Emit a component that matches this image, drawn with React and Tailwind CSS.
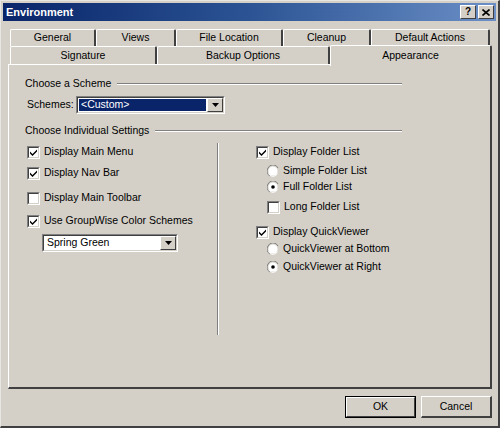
import React from 'react';

const font = { fontFamily: '"Liberation Sans", Arial, sans-serif' };

function Check({ checked }) {
    return (
        <span className="w-[13px] h-[13px] bg-white border-t border-l border-[#808080] border-r border-b border-r-white border-b-white shrink-0 flex">
            <span className="flex-1 border-t border-l border-[#404040] border-r border-b border-r-[#d4d0c8] border-b-[#d4d0c8] flex items-center justify-center">
                {checked && (
                    <svg width="9" height="9" viewBox="0 0 9 9">
                        <path d="M1 3.5 L3.5 6 L8 1.5 L8 3.5 L3.5 8 L1 5.5 Z" fill="#000" />
                    </svg>
                )}
            </span>
        </span>
    );
}

function Radio({ checked }) {
    return (
        <svg width="12" height="12" viewBox="0 0 12 12" className="shrink-0">
            <path d="M11 3 A5.5 5.5 0 0 0 1 3" fill="none" stroke="#808080" strokeWidth="1" />
            <path d="M1 3 A5.5 5.5 0 0 0 3 11" fill="none" stroke="#808080" strokeWidth="1" />
            <circle cx="6" cy="6" r="4.6" fill="#fff" />
            <path d="M1.5 8.5 A5 5 0 0 0 10.5 8.5" fill="none" stroke="#fff" strokeWidth="1" />
            {checked && <circle cx="6" cy="6" r="1.8" fill="#000" />}
        </svg>
    );
}

function Tab({ w, label, h = 'h-[17px]' }) {
    return (
        <div className={`${w} ${h} shrink-0 flex items-center justify-center border-l border-t border-white border-r-2 border-r-[#404040] rounded-tl-[2px] rounded-tr-[2px] text-[10.5px] text-black`}>
            {label}
        </div>
    );
}

function Item({ box, label, mt, indent = '' }) {
    return (
        <div className={`h-[16px] flex items-center ${mt} ${indent}`}>
            {box}
            <span className="ml-[4px] text-[10.5px] text-black">{label}</span>
        </div>
    );
}

function Select({ w, value, selected }) {
    return (
        <div className={`${w} h-[18px] flex bg-white border-t border-l border-[#808080] border-r border-b border-r-white border-b-white`}>
            <div className="flex-1 flex border-t border-l border-[#404040] border-r border-b border-r-[#d4d0c8] border-b-[#d4d0c8]">
                <div className="flex-1 flex items-center p-[1px]">
                    <span className={`h-full flex-1 flex items-center pl-[2px] text-[10.5px] ${selected ? 'bg-[#0a246a] text-white' : 'text-black'}`}>
                        {value}
                    </span>
                </div>
                <div className="w-[16px] bg-[#d4d0c8] border-t border-l border-white border-r border-b border-r-[#404040] border-b-[#404040] flex items-center justify-center">
                    <svg width="7" height="4" viewBox="0 0 7 4">
                        <path d="M0 0 H7 L3.5 4 Z" fill="#000" />
                    </svg>
                </div>
            </div>
        </div>
    );
}

function Heading({ label }) {
    return (
        <div className="h-[14px] flex items-center pr-[88px]">
            <span className="text-[10.5px] text-black">{label}</span>
            <div className="flex-1 ml-[6px] flex flex-col">
                <div className="h-px bg-[#808080]" />
                <div className="h-px bg-white" />
            </div>
        </div>
    );
}

export default function App() {
    return (
        <div className="w-[500px] h-[428px] bg-[#d4d0c8] flex flex-col border-l border-t border-[#e8e6e2] border-r-2 border-b-2 border-r-[#404040] border-b-[#404040] overflow-hidden" style={font}>
            {/* title bar */}
            <div className="mx-[2px] mt-[2px] h-[18px] flex items-center bg-gradient-to-r from-[#0a246a] via-[#2c5494] to-[#6b8fc6] pl-[3px] pr-[2px]">
                <span className="text-white text-[11px] font-bold flex-1">Environment</span>
                <div className="flex gap-[2px]">
                    <div className="w-[16px] h-[14px] bg-[#d4d0c8] border-t border-l border-white border-r border-b border-r-[#404040] border-b-[#404040] flex items-center justify-center text-[10px] font-bold leading-none">?</div>
                    <div className="w-[16px] h-[14px] bg-[#d4d0c8] border-t border-l border-white border-r border-b border-r-[#404040] border-b-[#404040] flex items-center justify-center">
                        <svg width="8" height="7" viewBox="0 0 8 7">
                            <path d="M0.5 0.5 L7.5 6.5 M7.5 0.5 L0.5 6.5" stroke="#000" strokeWidth="1.6" />
                        </svg>
                    </div>
                </div>
            </div>

            {/* tabs */}
            <div className="mt-[8px] pl-[9px] flex">
                <Tab w="w-[86px]" label="General" />
                <Tab w="w-[80px]" label="Views" />
                <Tab w="w-[107px]" label="File Location" />
                <Tab w="w-[88px]" label="Cleanup" />
                <Tab w="w-[119px]" label="Default Actions" />
            </div>
            <div className="h-[18px] pl-[9px] flex items-end">
                <Tab w="w-[147px]" h="h-[18px]" label="Signature" />
                <Tab w="w-[173px]" h="h-[18px]" label="Backup Options" />
                <div className="w-[162px] h-[21px] -mb-[2px] relative z-10 bg-[#d4d0c8] flex items-start justify-center pt-[2px] border-l border-t border-white border-r-2 border-r-[#404040] rounded-tl-[2px] rounded-tr-[2px] text-[10.5px] text-black">
                    Appearance
                </div>
            </div>

            {/* panel */}
            <div className="ml-[7px] w-[484px] h-[325px] border-l border-t border-white border-r-2 border-b-2 border-r-[#404040] border-b-[#404040] pl-[16px] pt-[12px] flex flex-col">
                <Heading label="Choose a Scheme" />
                <div className="mt-[5px] h-[18px] flex items-center">
                    <span className="text-[10.5px] text-black pl-[2px] w-[51px]">Schemes:</span>
                    <Select w="w-[149px]" value="<Custom>" selected />
                </div>
                <div className="mt-[10px]">
                    <Heading label="Choose Individual Settings" />
                </div>

                <div className="mt-[5px] h-[192px] flex">
                    <div className="w-[192px] pl-[2px] flex flex-col">
                        <Item mt="mt-[1px]" box={<Check checked />} label="Display Main Menu" />
                        <Item mt="mt-[5px]" box={<Check checked />} label="Display Nav Bar" />
                        <Item mt="mt-[9px]" box={<Check />} label="Display Main Toolbar" />
                        <Item mt="mt-[7px]" box={<Check checked />} label="Use GroupWise Color Schemes" />
                        <div className="mt-[5px] ml-[15px]">
                            <Select w="w-[136px]" value="Spring Green" />
                        </div>
                    </div>
                    <div className="w-[2px] flex">
                        <div className="w-px bg-[#808080]" />
                        <div className="w-px bg-white" />
                    </div>
                    <div className="pl-[37px] flex flex-col">
                        <Item mt="mt-[1px]" box={<Check checked />} label="Display Folder List" />
                        <Item mt="mt-[3px]" indent="pl-[11px]" box={<Radio />} label="Simple Folder List" />
                        <Item mt="mt-0" indent="pl-[11px]" box={<Radio checked />} label="Full Folder List" />
                        <Item mt="mt-[4px]" indent="pl-[11px]" box={<Check />} label="Long Folder List" />
                        <Item mt="mt-[9px]" box={<Check checked />} label="Display QuickViewer" />
                        <Item mt="mt-[1px]" indent="pl-[11px]" box={<Radio />} label="QuickViewer at Bottom" />
                        <Item mt="mt-[2px]" indent="pl-[11px]" box={<Radio checked />} label="QuickViewer at Right" />
                    </div>
                </div>
            </div>

            {/* buttons */}
            <div className="mt-[7px] flex justify-end pr-[6px] gap-[5px]">
                <div className="w-[71px] h-[22px] border border-black flex">
                    <div className="flex-1 flex items-center justify-center border-t border-l border-white border-r border-b border-r-[#404040] border-b-[#404040] text-[10.5px] text-black">
                        OK
                    </div>
                </div>
                <div className="w-[71px] h-[22px] flex items-center justify-center border-t border-l border-white border-r-2 border-b-2 border-r-[#404040] border-b-[#404040] text-[10.5px] text-black">
                    Cancel
                </div>
            </div>
        </div>
    );
}
